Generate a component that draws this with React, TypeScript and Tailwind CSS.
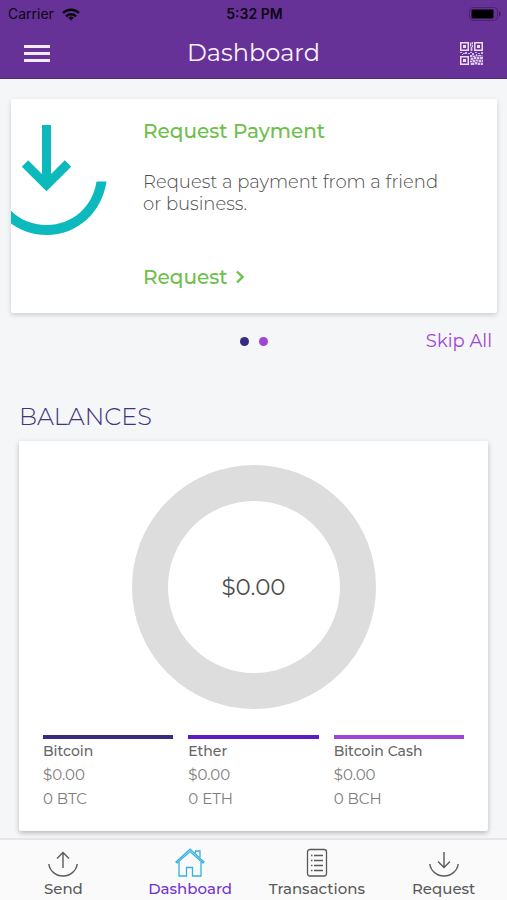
import clsx from 'clsx';
import React from 'react';

interface IBalance {
  name: string;
  value: string;
  amount: string;
  bar: string;
}

interface ITab {
  label: string;
  icon: React.ReactNode;
  active?: boolean;
}

const balances: IBalance[] = [
  { name: 'Bitcoin', value: '$0.00', amount: '0 BTC', bar: 'border-[#3a2a82]' },
  { name: 'Ether', value: '$0.00', amount: '0 ETH', bar: 'border-[#5c1cc4]' },
  { name: 'Bitcoin Cash', value: '$0.00', amount: '0 BCH', bar: 'border-[#a044d8]' },
];

function WifiIcon(): JSX.Element {
  return (
    <svg viewBox="0 0 18 13" className="w-[18px] h-[13px]" fill="none" stroke="#0b0512" strokeWidth="2.4" aria-hidden="true">
      <path d="M1 5a11.5 11.5 0 0 1 16 0" />
      <path d="M4 8.3a7.2 7.2 0 0 1 10 0" />
      <path d="M9 12.6 6.2 9.8a4 4 0 0 1 5.6 0z" fill="#0b0512" stroke="none" />
    </svg>
  );
}

function BatteryIcon(): JSX.Element {
  return (
    <svg viewBox="0 0 32 14" className="w-8 h-3.5" aria-hidden="true">
      <rect x="0.5" y="0.5" width="28" height="13" rx="3.5" fill="none" stroke="#4a2370" />
      <rect x="2.5" y="2.5" width="22" height="9" rx="1" fill="#000" />
      <path d="M30 4.5c1.2.4 1.8 1.3 1.8 2.5s-.6 2.1-1.8 2.5z" fill="#3f1c62" />
    </svg>
  );
}

function QrIcon(): JSX.Element {
  return (
    <svg viewBox="0 0 23 23" className="w-[23px] h-[23px]" fill="#eedcfa" aria-hidden="true">
      <path fillRule="evenodd" d="M0 0h9v9H0zM1.5 1.5v6h6v-6zM14 0h9v9h-9zM15.5 1.5v6h6v-6zM0 14h9v9H0zM1.5 15.5v6h6v-6z" />
      <path d="M3 3h3v3H3zM17 3h3v3h-3zM3 17h3v3H3z" />
      <path opacity="0.35" d="M10 13h13v10H10zM10 0h3v9h-3z" />
      <path opacity="0.8" d="M10 1h1v3h-1zM12 0h1v2h-1zM11 5h1v4h-1zM12 3h1v2h-1zM0 10h2v1H0zM3 11h2v1H3zM2 12h1v1H2zM5 10h2v2H5zM8 11h2v1H8zM10 10h2v1h-2zM12 11h2v2h-2zM15 10h2v1h-2zM18 11h2v1h-2zM21 10h2v2h-2z" />
      <path opacity="0.8" d="M10 13h2v2h-2zM13 14h2v1h-2zM16 12h1v2h-1zM18 13h3v1h-3zM11 16h2v2h-2zM14 15h2v2h-2zM17 15h2v2h-2zM20 15h3v2h-3zM10 19h2v1h-2zM13 18h2v2h-2zM16 18h2v1h-2zM19 18h2v2h-2zM22 18h1v2h-1zM11 21h3v2h-3zM15 20h2v2h-2zM18 21h2v2h-2zM21 21h2v2h-2z" />
    </svg>
  );
}

function ReceiveArt(): JSX.Element {
  return (
    <svg viewBox="0 0 132 140" className="w-[132px] h-[140px] shrink-0" fill="none" stroke="#0cb9bd" strokeWidth="9" aria-hidden="true">
      <path d="M35.5 26v60" />
      <path d="M14 64.5 35.5 86 57 64.5" />
      <path d="M-24.8 82.500H-14.800C-11 107 9 126 35.500 126S82 107 85.500 82.500H95.500C91 113 67 136 35.500 136S-20 113-24.800 82.500z" fill="#0cb9bd" stroke="none" />
    </svg>
  );
}

function SendIcon(): JSX.Element {
  return (
    <svg viewBox="0 0 30 30" className="w-[30px] h-[30px]" fill="none" stroke="currentColor" strokeWidth="1.4" aria-hidden="true">
      <path d="M15 20V4.500M9 10.5l6-6 6 6" />
      <path d="M.8 16c1 7 7 12 14.2 12s13.2-5 14.2-12" />
    </svg>
  );
}

function HomeIcon(): JSX.Element {
  return (
    <svg viewBox="0 0 30 30" className="w-[30px] h-[30px]" fill="none" stroke="#35b1e1" strokeWidth="1.3" aria-hidden="true">
      <path d="M4 14v14h7.5v-8.500h6V28H26V14" />
      <path d="M1 14 15 1.200 29 14l-1.200 1L15 3.500 2.200 15z" />
      <path d="M20.500 5.500V3H25v6.500" />
    </svg>
  );
}

function ListIcon(): JSX.Element {
  return (
    <svg viewBox="0 0 30 30" className="w-[30px] h-[30px]" fill="none" stroke="currentColor" strokeWidth="1.3" aria-hidden="true">
      <rect x="5.5" y="1.5" width="19" height="26.5" rx="2.5" />
      <path d="M12 7.5h9M12 12.5h9M12 17.5h9M12 22.5h9" />
      <path d="M9 7.5h1.5M9 12.5h1.5M9 17.5h1.5M9 22.5h1.5" />
    </svg>
  );
}

function RequestIcon(): JSX.Element {
  return (
    <svg viewBox="0 0 30 30" className="w-[30px] h-[30px]" fill="none" stroke="currentColor" strokeWidth="1.4" aria-hidden="true">
      <path d="M15 4v15.500M9 13.500l6 6 6-6" />
      <path d="M.8 16c1 7 7 12 14.2 12s13.2-5 14.2-12" />
    </svg>
  );
}

const tabs: ITab[] = [
  { label: 'Send', icon: <SendIcon /> },
  { label: 'Dashboard', icon: <HomeIcon />, active: true },
  { label: 'Transactions', icon: <ListIcon /> },
  { label: 'Request', icon: <RequestIcon /> },
];

function Header(): JSX.Element {
  return (
    <header className="bg-[#673297] border-b border-[#56268a]">
      <div className="grid grid-cols-[1fr_auto_1fr] items-center h-7 pl-2 pr-1.5 font-['Inter',sans-serif] text-sm text-[#0b0512]">
        <div className="flex items-center gap-2">
          <span>Carrier</span>
          <WifiIcon />
        </div>
        <span className="font-semibold">5:32 PM</span>
        <div className="flex justify-end">
          <BatteryIcon />
        </div>
      </div>
      <div className="grid grid-cols-[1fr_auto_1fr] items-center h-[50px] px-6">
        <button type="button" aria-label="Menu" className="flex flex-col gap-1 w-[26px] py-1">
          <span className="h-[3px] w-full bg-[#f3eaf9]" />
          <span className="h-[3px] w-full bg-[#f3eaf9]" />
          <span className="h-[3px] w-full bg-[#f3eaf9]" />
        </button>
        <h1 className="text-2xl leading-8 text-[#f8f1fc]">Dashboard</h1>
        <button type="button" aria-label="Scan QR code" className="justify-self-end">
          <QrIcon />
        </button>
      </div>
    </header>
  );
}

function RequestCard(): JSX.Element {
  return (
    <section className="flex bg-white rounded-xs shadow-[0_2px_5px_rgba(0,0,0,0.17)] overflow-hidden">
      <ReceiveArt />
      <div className="flex flex-col items-start pt-5 pb-6 pr-12">
        <h2 className="text-xl leading-6 font-medium text-[#6cc04b]">Request Payment</h2>
        <p className="mt-7 text-lg leading-[22px] font-light text-[#4d4d4d]">
          Request a payment from a friend or business.
        </p>
        <a href="#request" className="mt-[50px] flex items-center gap-2 text-xl leading-6 font-medium text-[#6cc04b]">
          Request
          <svg viewBox="0 0 8 14" className="w-2 h-3.5" fill="none" stroke="currentColor" strokeWidth="2.4" aria-hidden="true">
            <path d="m1 1.5 5.5 5.5L1 12.5" />
          </svg>
        </a>
      </div>
    </section>
  );
}

function BalancesCard(): JSX.Element {
  return (
    <section className="bg-white rounded-xs shadow-[0_2px_5px_rgba(0,0,0,0.25)] px-6 pt-6 pb-5">
      <div className="mx-auto flex items-center justify-center size-[244px] rounded-full border-[36px] border-[#ddd]">
        <span className="text-[23px] leading-8 text-[#4d4d4d]">$0.00</span>
      </div>
      <ul className="mt-[26px] grid grid-cols-3 gap-[15px]">
        {balances.map((balance) => (
          <li key={balance.name} className={clsx('border-t-4 text-[15px] leading-6 text-[#7c7c7c]', balance.bar)}>
            <h3 className="text-sm leading-6 font-medium text-[#666]">{balance.name}</h3>
            <p>{balance.value}</p>
            <p>{balance.amount}</p>
          </li>
        ))}
      </ul>
    </section>
  );
}

function TabBar(): JSX.Element {
  return (
    <nav className="sticky bottom-0 mt-auto grid grid-cols-4 bg-[#fafafa] border-t-2 border-[#e6e6e8]">
      {tabs.map((tab) => (
        <button
          key={tab.label}
          type="button"
          className={clsx(
            'flex flex-col items-center pt-2 text-[15px] leading-[22px] font-medium',
            tab.active ? 'text-[#7433cd]' : 'text-[#5a5a5a]',
          )}
        >
          {tab.icon}
          {tab.label}
        </button>
      ))}
    </nav>
  );
}

export default function App(): JSX.Element {
  return (
    <div className="flex flex-col min-h-screen bg-[#f4f6f8] font-['Montserrat','Inter',sans-serif]">
      <Header />
      <main className="pt-5 pb-[7px]">
        <div className="pl-[11px] pr-2.5">
          <RequestCard />
        </div>
        <div className="mt-4 grid grid-cols-3 items-center px-[15px]">
          <span />
          <div className="flex justify-center gap-2.5">
            <span className="size-[9px] rounded-full bg-[#3a2a82]" />
            <span className="size-[9px] rounded-full bg-[#a044d8]" />
          </div>
          <button type="button" className="justify-self-end text-lg leading-6 text-[#a044d8]">
            Skip All
          </button>
        </div>
        <div className="mt-12 px-[19px]">
          <h2 className="mb-2 text-2xl leading-8 font-light text-[#3f3480]">BALANCES</h2>
          <BalancesCard />
        </div>
      </main>
      <TabBar />
    </div>
  );
}
